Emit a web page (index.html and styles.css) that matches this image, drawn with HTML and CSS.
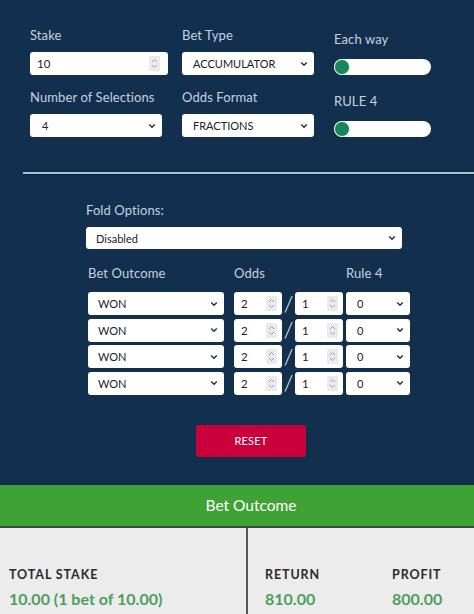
FILE: index.html
```html
<!DOCTYPE html>
<html>
<head>
<meta charset="utf-8">
<link rel="stylesheet" href="styles.css">
</head>
<body>
<div class="calc">
  <div class="settings">
    <div class="field">
      <label class="lbl">Stake</label>
      <div class="num w-stake"><input class="num-in" type="text" value="10"><span class="spin"><svg viewBox="0 0 11 15" width="11" height="15"><path d="M3 6 L5.5 3.5 L8 6 M3 9 L5.5 11.5 L8 9" fill="none" stroke="#9aa0ab" stroke-width="1"/></svg></span></div>
    </div>
    <div class="field">
      <label class="lbl">Bet Type</label>
      <select class="sel w-type"><option>ACCUMULATOR</option></select>
    </div>
    <div class="field field-tog">
      <label class="lbl">Each way</label>
      <div class="toggle"><span class="knob"></span></div>
    </div>
    <div class="field">
      <label class="lbl">Number of Selections</label>
      <select class="sel w-sel"><option>4</option></select>
    </div>
    <div class="field">
      <label class="lbl">Odds Format</label>
      <select class="sel w-type"><option>FRACTIONS</option></select>
    </div>
    <div class="field field-tog">
      <label class="lbl">RULE 4</label>
      <div class="toggle"><span class="knob"></span></div>
    </div>
  </div>

  <hr class="divider">

  <div class="fold">
    <label class="lbl">Fold Options:</label>
    <select class="sel w-fold"><option>Disabled</option></select>

    <div class="grid-head">
      <span class="lbl h-out">Bet Outcome</span>
      <span class="lbl h-odds">Odds</span>
      <span class="lbl h-r4">Rule 4</span>
    </div>

    <div class="rows">
      <div class="row">
        <select class="sel w-out"><option>WON</option></select>
        <div class="num w-odd"><input class="num-in" type="text" value="2"><span class="spin"><svg viewBox="0 0 11 15" width="11" height="15"><path d="M3 6 L5.5 3.5 L8 6 M3 9 L5.5 11.5 L8 9" fill="none" stroke="#9aa0ab" stroke-width="1"/></svg></span></div>
        <span class="slash">/</span>
        <div class="num w-odd"><input class="num-in" type="text" value="1"><span class="spin"><svg viewBox="0 0 11 15" width="11" height="15"><path d="M3 6 L5.5 3.5 L8 6 M3 9 L5.5 11.5 L8 9" fill="none" stroke="#9aa0ab" stroke-width="1"/></svg></span></div>
        <select class="sel w-r4"><option>0</option></select>
      </div>
      <div class="row">
        <select class="sel w-out"><option>WON</option></select>
        <div class="num w-odd"><input class="num-in" type="text" value="2"><span class="spin"><svg viewBox="0 0 11 15" width="11" height="15"><path d="M3 6 L5.5 3.5 L8 6 M3 9 L5.5 11.5 L8 9" fill="none" stroke="#9aa0ab" stroke-width="1"/></svg></span></div>
        <span class="slash">/</span>
        <div class="num w-odd"><input class="num-in" type="text" value="1"><span class="spin"><svg viewBox="0 0 11 15" width="11" height="15"><path d="M3 6 L5.5 3.5 L8 6 M3 9 L5.5 11.5 L8 9" fill="none" stroke="#9aa0ab" stroke-width="1"/></svg></span></div>
        <select class="sel w-r4"><option>0</option></select>
      </div>
      <div class="row">
        <select class="sel w-out"><option>WON</option></select>
        <div class="num w-odd"><input class="num-in" type="text" value="2"><span class="spin"><svg viewBox="0 0 11 15" width="11" height="15"><path d="M3 6 L5.5 3.5 L8 6 M3 9 L5.5 11.5 L8 9" fill="none" stroke="#9aa0ab" stroke-width="1"/></svg></span></div>
        <span class="slash">/</span>
        <div class="num w-odd"><input class="num-in" type="text" value="1"><span class="spin"><svg viewBox="0 0 11 15" width="11" height="15"><path d="M3 6 L5.5 3.5 L8 6 M3 9 L5.5 11.5 L8 9" fill="none" stroke="#9aa0ab" stroke-width="1"/></svg></span></div>
        <select class="sel w-r4"><option>0</option></select>
      </div>
      <div class="row">
        <select class="sel w-out"><option>WON</option></select>
        <div class="num w-odd"><input class="num-in" type="text" value="2"><span class="spin"><svg viewBox="0 0 11 15" width="11" height="15"><path d="M3 6 L5.5 3.5 L8 6 M3 9 L5.5 11.5 L8 9" fill="none" stroke="#9aa0ab" stroke-width="1"/></svg></span></div>
        <span class="slash">/</span>
        <div class="num w-odd"><input class="num-in" type="text" value="1"><span class="spin"><svg viewBox="0 0 11 15" width="11" height="15"><path d="M3 6 L5.5 3.5 L8 6 M3 9 L5.5 11.5 L8 9" fill="none" stroke="#9aa0ab" stroke-width="1"/></svg></span></div>
        <select class="sel w-r4"><option>0</option></select>
      </div>
    </div>

    <div class="btn-wrap"><button class="reset">RESET</button></div>
  </div>
</div>

<div class="outcome-bar">Bet Outcome</div>

<div class="results">
  <div class="res-left">
    <div class="res-item">
      <div class="res-lbl">TOTAL STAKE</div>
      <div class="res-val">10.00 (1 bet of 10.00)</div>
    </div>
  </div>
  <div class="res-right">
    <div class="res-item">
      <div class="res-lbl">RETURN</div>
      <div class="res-val">810.00</div>
    </div>
    <div class="res-item">
      <div class="res-lbl">PROFIT</div>
      <div class="res-val">800.00</div>
    </div>
  </div>
</div>
</body>
</html>
```

FILE: styles.css
```css
* { box-sizing: border-box; }

body {
  margin: 0;
  background: #ececec;
  font-family: "Lato", "Noto Sans", sans-serif;
}

.calc {
  background: #12304e;
  padding: 27px 0 28px 0;
}

.settings {
  display: grid;
  grid-template-columns: 152px 152px 140px;
  row-gap: 14px;
  padding-left: 30px;
}

.field {
  display: flex;
  flex-direction: column;
}

.lbl {
  color: #c4d1e0;
  font-size: 13px;
  line-height: 16px;
  margin-bottom: 9px;
  letter-spacing: 0.1px;
}

.field-tog {
  padding-top: 4px;
}

.field-tog .lbl {
  margin-bottom: 12px;
}

.sel {
  -webkit-appearance: none;
  appearance: none;
  height: 23px;
  border: none;
  border-radius: 3px;
  background-color: #fff;
  background-image: url("data:image/svg+xml,%3Csvg xmlns='http://www.w3.org/2000/svg' width='8' height='6' viewBox='0 0 8 6'%3E%3Cpath d='M1.2 1.5 L4 4.3 L6.8 1.5' fill='none' stroke='%23333' stroke-width='1.5'/%3E%3C/svg%3E");
  background-repeat: no-repeat;
  background-position: right 6px center;
  font-family: "Lato", "Noto Sans", sans-serif;
  font-size: 11px;
  color: #222;
  padding: 0 0 0 11px;
  margin: 0;
}

.num {
  display: flex;
  align-items: center;
  height: 23px;
  background: #fff;
  border-radius: 3px;
  padding: 0 8px 0 7px;
}

.num-in {
  border: none;
  outline: none;
  background: transparent;
  flex: 1;
  min-width: 0;
  padding: 0;
  font-family: "Lato", "Noto Sans", sans-serif;
  font-size: 11.5px;
  color: #222;
}

.spin {
  display: flex;
  width: 11px;
  height: 15px;
  background: #ebebef;
  border-radius: 1px;
}

.w-stake { width: 138px; }
.w-type { width: 132px; }
.w-sel { width: 132px; padding-left: 12px; }
.w-fold { width: 316px; padding-left: 10px; }
.w-out { width: 136px; padding-left: 10px; }
.w-odd { width: 48px; padding-left: 7px; padding-right: 5px; }
.w-r4 { width: 64px; padding-left: 11px; }

.toggle {
  width: 97px;
  height: 16px;
  background: #fff;
  border-radius: 8px;
  display: flex;
  align-items: center;
}

.knob {
  width: 16px;
  height: 16px;
  border-radius: 50%;
  background: #17865a;
  border: 1.5px solid #d8efe4;
}

.divider {
  margin: 35px 0 0 23px;
  border: none;
  height: 3px;
  background: linear-gradient(#a9c4de 0, #a9c4de 2px, #0b2035 2px);
}

.fold {
  margin-left: 86px;
  width: 330px;
  padding-top: 27px;
  display: flex;
  flex-direction: column;
}

.fold > .lbl {
  margin-bottom: 9px;
}

.fold .w-fold {
  height: 22px;
}

.grid-head {
  display: flex;
  margin-top: 16px;
  padding-left: 2px;
}

.grid-head .lbl {
  margin-bottom: 0;
}

.h-out { width: 146px; }
.h-odds { width: 112px; }

.rows {
  display: flex;
  flex-direction: column;
  gap: 3.6px;
  margin-top: 11px;
  padding-left: 2px;
}

.row {
  display: flex;
  align-items: center;
}

.row .w-out { margin-right: 10px; }

.slash {
  width: 13px;
  text-align: center;
  color: #fff;
  font-size: 22px;
  line-height: 22px;
  font-weight: 300;
}

.row .w-r4 { margin-left: 3px; }

.btn-wrap {
  display: flex;
  justify-content: center;
  margin-top: 30px;
}

.reset {
  width: 110px;
  height: 32px;
  background: #c9003b;
  color: #fff;
  border: none;
  border-radius: 3px;
  font-family: "Lato", "Noto Sans", sans-serif;
  font-size: 11px;
  letter-spacing: 0.2px;
}

.outcome-bar {
  background: #3fa235;
  color: #fff;
  height: 43px;
  display: flex;
  align-items: center;
  justify-content: center;
  padding-left: 28px;
  font-size: 15.5px;
  border-bottom: 2px solid #3d4a40;
}

.results {
  display: flex;
  background: #ececec;
  height: 90px;
}

.res-left {
  width: 248px;
  border-right: 2px solid #555;
  padding: 39px 0 0 9px;
}

.res-right {
  flex: 1;
  display: flex;
  padding: 39px 0 0 17px;
}

.res-right .res-item:first-child { width: 127px; }

.res-lbl {
  font-weight: 700;
  font-size: 12.5px;
  letter-spacing: 0.9px;
  color: #2a2a2a;
  line-height: 15px;
}

.res-val {
  font-weight: 700;
  font-size: 16px;
  color: #4c9e5e;
  margin-top: 7px;
  line-height: 20px;
}
```
